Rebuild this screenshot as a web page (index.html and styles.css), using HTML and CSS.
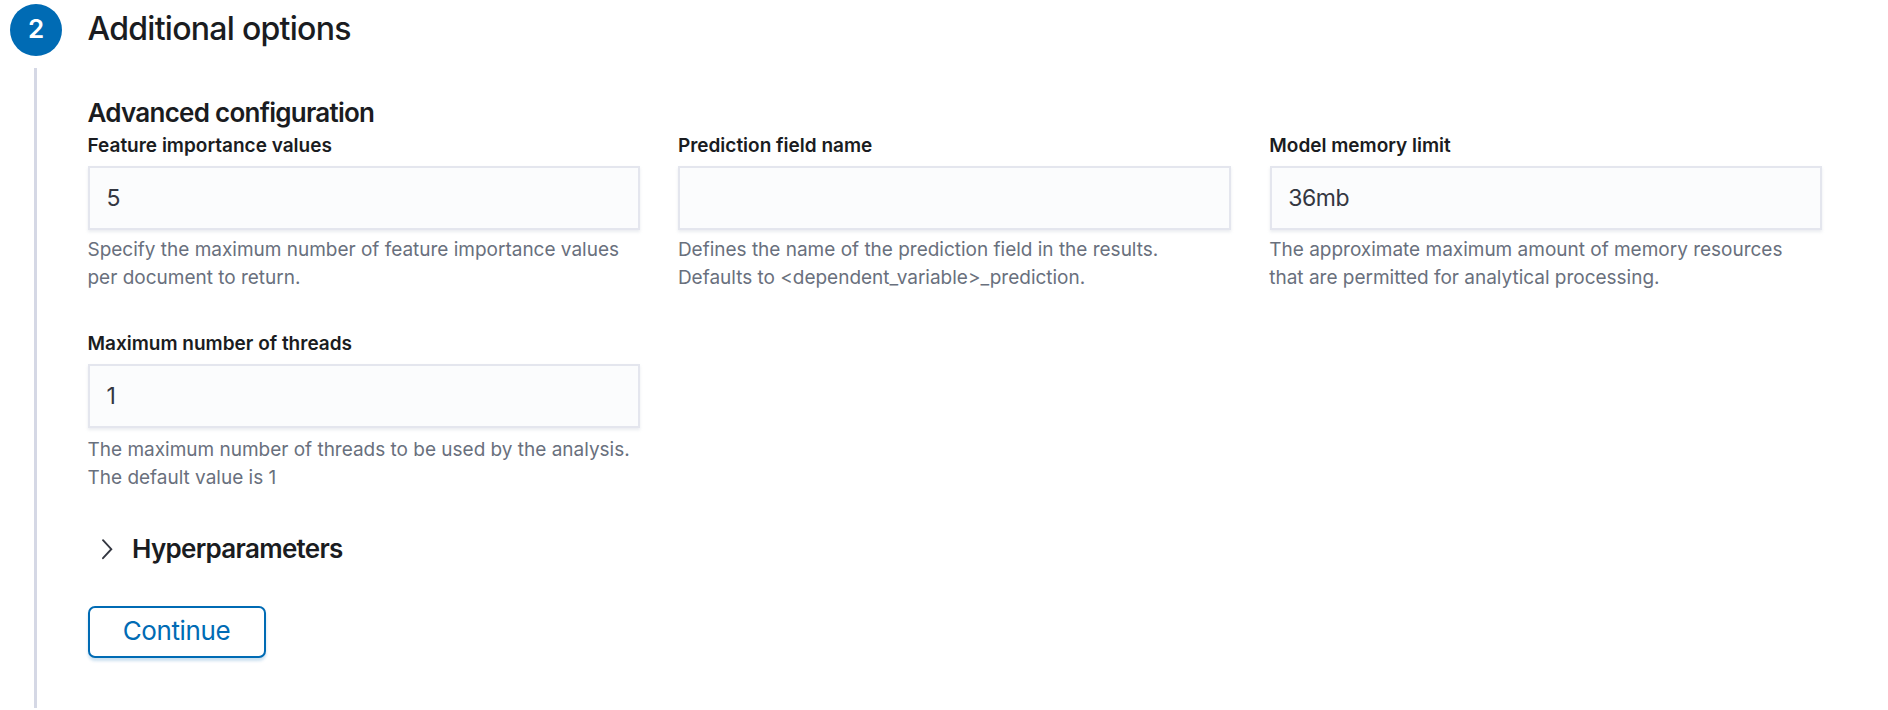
FILE: index.html
```html
<!DOCTYPE html>
<html lang="en">
<head>
<meta charset="utf-8">
<title>Additional options</title>
<link rel="stylesheet" href="styles.css">
</head>
<body>
<section class="step">
  <div class="step-rail">
    <span class="step-number">2</span>
    <span class="step-line"></span>
  </div>
  <div class="step-main">
    <h1 class="step-title">Additional options</h1>
    <h2 class="section-title">Advanced configuration</h2>
    <div class="form-grid">
      <div class="field">
        <label class="label" for="feature">Feature importance values</label>
        <input class="input" id="feature" type="text" value="5">
        <p class="help">Specify the maximum number of feature importance values<br>per document to return.</p>
      </div>
      <div class="field">
        <label class="label" for="prediction">Prediction field name</label>
        <input class="input" id="prediction" type="text" value="">
        <p class="help">Defines the name of the prediction field in the results.<br>Defaults to &lt;dependent_variable&gt;_prediction.</p>
      </div>
      <div class="field">
        <label class="label" for="memory">Model memory limit</label>
        <input class="input" id="memory" type="text" value="36mb">
        <p class="help">The approximate maximum amount of memory resources<br>that are permitted for analytical processing.</p>
      </div>
      <div class="field field-threads">
        <label class="label" for="threads">Maximum number of threads</label>
        <input class="input" id="threads" type="text" value="1">
        <p class="help">The maximum number of threads to be used by the analysis.<br>The default value is 1</p>
      </div>
    </div>
    <button class="accordion" type="button">
      <svg class="chevron" width="12" height="22" viewBox="0 0 12 22"><path d="M2 2.2 10.3 11.2 2 20.2"/></svg>
      <span>Hyperparameters</span>
    </button>
    <button class="continue" type="button">Continue</button>
  </div>
</section>
</body>
</html>
```

FILE: styles.css
```css
* { box-sizing: border-box; }

body {
  margin: 0;
  background: #fff;
  color: #1a1c21;
  font-family: Inter, "Liberation Sans", sans-serif;
}

h1, h2, p { margin: 0; }

.step {
  display: flex;
  gap: 26px;
  height: 710px;
  padding: 4px 66px 2px 10px;
  overflow: hidden;
}

.step-rail {
  display: flex;
  flex: 0 0 52px;
  flex-direction: column;
  align-items: center;
  gap: 12px;
}

.step-number {
  width: 52px;
  height: 52px;
  border-radius: 50%;
  background: #006bb4;
  color: #fff;
  font-size: 26px;
  font-weight: 600;
  line-height: 50px;
  text-align: center;
}

.step-line {
  flex: 1;
  width: 3px;
  margin-right: 1px;
  background: #d5d8e5;
}

.step-main { flex: 1; min-width: 0; }

.step-title,
.section-title,
.label,
.help { margin-left: -0.5px; }

.step-title {
  height: 92px;
  font-size: 32px;
  font-weight: 500;
  letter-spacing: -0.72px;
  line-height: 50px;
}

.section-title {
  height: 34px;
  font-size: 26px;
  font-weight: 600;
  letter-spacing: -0.74px;
  line-height: 34px;
}

.form-grid {
  display: grid;
  grid-template-columns: 552px 553px 552px;
  column-gap: 38.4px;
  row-gap: 36px;
}

.label {
  display: block;
  height: 36px;
  font-size: 19px;
  font-weight: 600;
  line-height: 32px;
}

.input {
  display: block;
  width: 100%;
  height: 64px;
  padding: 0 16.5px;
  border: 2px solid #e4e6ee;
  border-radius: 0;
  background: #fbfcfd;
  box-shadow: 0 2px 3px rgba(152, 162, 179, 0.2);
  color: #343741;
  font: 400 23px/30px Inter, "Liberation Sans", sans-serif;
  letter-spacing: -0.5px;
}

.help {
  padding-top: 6px;
  color: #69707d;
  font-size: 19px;
  letter-spacing: -0.01px;
  line-height: 28px;
  white-space: nowrap;
}

.field-threads .help { padding-top: 8px; }

.accordion {
  display: flex;
  align-items: center;
  gap: 19px;
  height: 36px;
  margin-top: 39px;
  padding: 0 13px;
  border: 0;
  background: none;
  color: #1a1c21;
  font: 600 26px/36px Inter, "Liberation Sans", sans-serif;
  letter-spacing: -0.7px;
}

.chevron {
  fill: none;
  stroke: #343741;
  stroke-width: 1.9;
  stroke-linecap: round;
}

.continue {
  display: block;
  width: 178px;
  height: 52px;
  margin-top: 39px;
  padding: 0 1px 2px 0;
  border: 2px solid #006bb4;
  border-radius: 7px;
  background: #fff;
  box-shadow: 0 3px 3px rgba(0, 107, 180, 0.2);
  color: #006bb4;
  font: 400 26px/44px Inter, "Liberation Sans", sans-serif;
  letter-spacing: -0.4px;
}
```
